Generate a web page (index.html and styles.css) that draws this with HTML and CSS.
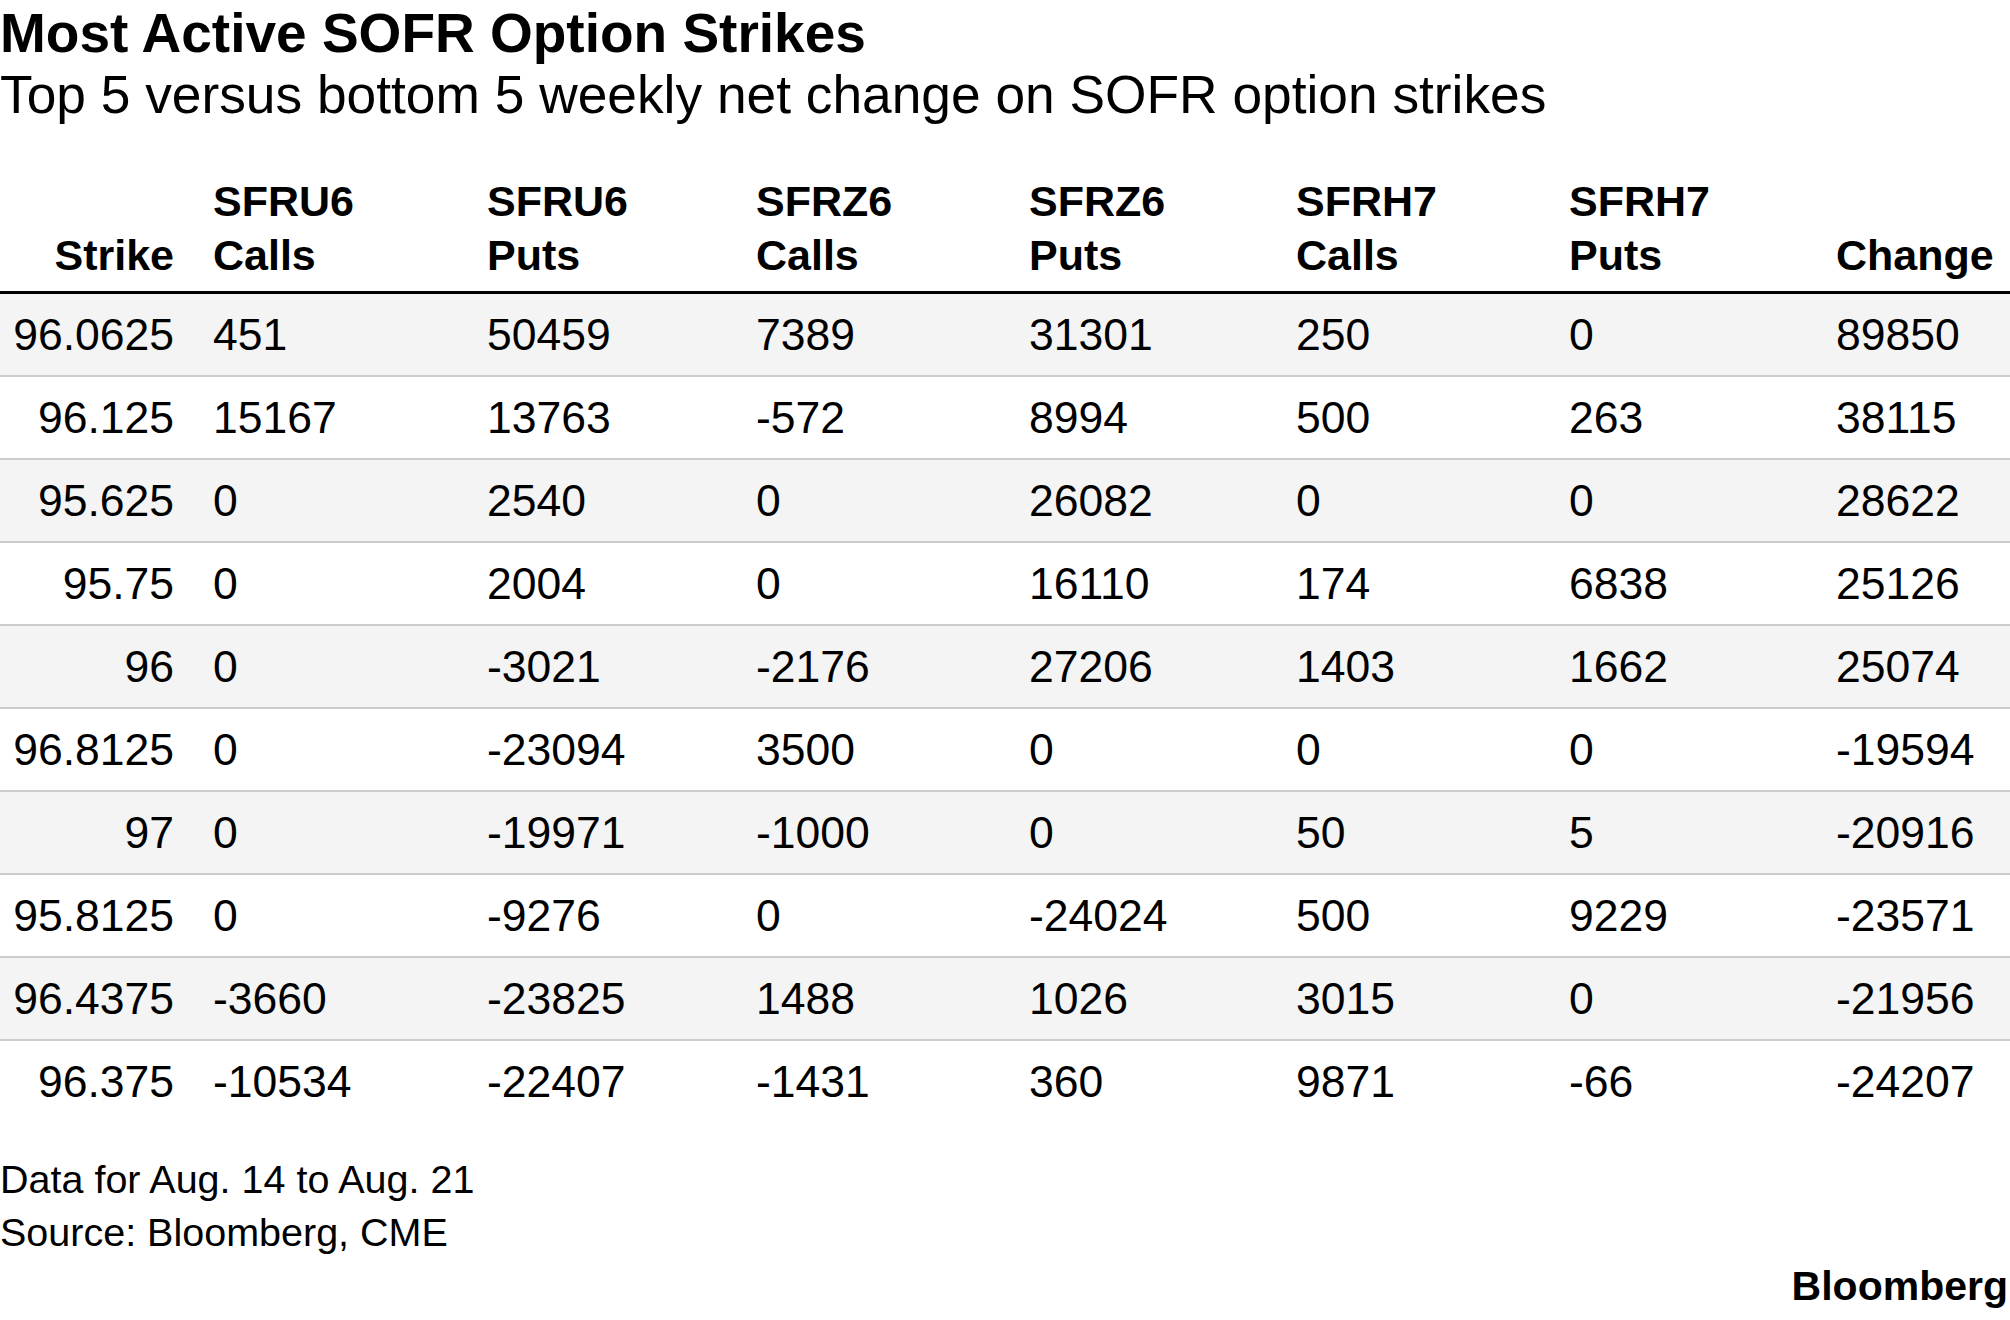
FILE: index.html
```html
<!DOCTYPE html>
<html lang="en">
<head>
<meta charset="utf-8">
<title>Most Active SOFR Option Strikes</title>
<link rel="stylesheet" href="styles.css">
</head>
<body>
<div class="chart">
  <h1 class="title">Most Active SOFR Option Strikes</h1>
  <p class="subtitle">Top 5 versus bottom 5 weekly net change on SOFR option strikes</p>
  <div class="table">
    <div class="row head">
      <div class="cell first">Strike</div>
      <div class="cell">SFRU6<br>Calls</div>
      <div class="cell">SFRU6<br>Puts</div>
      <div class="cell">SFRZ6<br>Calls</div>
      <div class="cell">SFRZ6<br>Puts</div>
      <div class="cell">SFRH7<br>Calls</div>
      <div class="cell">SFRH7<br>Puts</div>
      <div class="cell">Change</div>
    </div>
    <div class="row body alt">
      <div class="cell first">96.0625</div><div class="cell">451</div><div class="cell">50459</div><div class="cell">7389</div><div class="cell">31301</div><div class="cell">250</div><div class="cell">0</div><div class="cell">89850</div>
    </div>
    <div class="row body">
      <div class="cell first">96.125</div><div class="cell">15167</div><div class="cell">13763</div><div class="cell">-572</div><div class="cell">8994</div><div class="cell">500</div><div class="cell">263</div><div class="cell">38115</div>
    </div>
    <div class="row body alt">
      <div class="cell first">95.625</div><div class="cell">0</div><div class="cell">2540</div><div class="cell">0</div><div class="cell">26082</div><div class="cell">0</div><div class="cell">0</div><div class="cell">28622</div>
    </div>
    <div class="row body">
      <div class="cell first">95.75</div><div class="cell">0</div><div class="cell">2004</div><div class="cell">0</div><div class="cell">16110</div><div class="cell">174</div><div class="cell">6838</div><div class="cell">25126</div>
    </div>
    <div class="row body alt">
      <div class="cell first">96</div><div class="cell">0</div><div class="cell">-3021</div><div class="cell">-2176</div><div class="cell">27206</div><div class="cell">1403</div><div class="cell">1662</div><div class="cell">25074</div>
    </div>
    <div class="row body">
      <div class="cell first">96.8125</div><div class="cell">0</div><div class="cell">-23094</div><div class="cell">3500</div><div class="cell">0</div><div class="cell">0</div><div class="cell">0</div><div class="cell">-19594</div>
    </div>
    <div class="row body alt">
      <div class="cell first">97</div><div class="cell">0</div><div class="cell">-19971</div><div class="cell">-1000</div><div class="cell">0</div><div class="cell">50</div><div class="cell">5</div><div class="cell">-20916</div>
    </div>
    <div class="row body">
      <div class="cell first">95.8125</div><div class="cell">0</div><div class="cell">-9276</div><div class="cell">0</div><div class="cell">-24024</div><div class="cell">500</div><div class="cell">9229</div><div class="cell">-23571</div>
    </div>
    <div class="row body alt">
      <div class="cell first">96.4375</div><div class="cell">-3660</div><div class="cell">-23825</div><div class="cell">1488</div><div class="cell">1026</div><div class="cell">3015</div><div class="cell">0</div><div class="cell">-21956</div>
    </div>
    <div class="row body">
      <div class="cell first">96.375</div><div class="cell">-10534</div><div class="cell">-22407</div><div class="cell">-1431</div><div class="cell">360</div><div class="cell">9871</div><div class="cell">-66</div><div class="cell">-24207</div>
    </div>
  </div>
  <div class="notes">
    <p>Data for Aug. 14 to Aug. 21</p>
    <p>Source: Bloomberg, CME</p>
  </div>
  <div class="brand">Bloomberg</div>
</div>
</body>
</html>
```

FILE: styles.css
```css
html, body {
  margin: 0;
  padding: 0;
  background: #ffffff;
}

body {
  color: #000000;
  font-family: "Liberation Sans", Arial, sans-serif;
}

.chart {
  width: 2010px;
}

.title {
  margin: 3px 0 0;
  font-size: 55px;
  line-height: 60px;
  font-weight: 700;
}

.subtitle {
  margin: 1.5px 0 0;
  font-size: 53.3px;
  line-height: 60px;
  font-weight: 400;
}

.table {
  margin-top: 49.5px;
}

.row {
  display: grid;
  grid-template-columns: 213px 274px 269px 273px 267px 273px 267px 1fr;
}

.cell {
  white-space: nowrap;
}

.cell.first {
  text-align: right;
  padding-right: 39px;
}

.head {
  font-size: 43px;
  line-height: 54px;
  font-weight: 700;
  align-items: end;
  padding-bottom: 9px;
  border-bottom: 3px solid #000000;
}

.body {
  height: 81px;
  align-items: center;
  font-size: 44.5px;
  line-height: 81px;
  border-bottom: 2.5px solid #cccccc;
}

.body:last-child {
  border-bottom: none;
}

.alt {
  background: #f4f4f4;
}

.notes {
  margin-top: 31px;
}

.notes p {
  margin: 0;
  font-size: 39.5px;
  line-height: 53px;
}

.brand {
  margin-top: 3px;
  padding-right: 2px;
  text-align: right;
  font-size: 41px;
  line-height: 48px;
  font-weight: 700;
}
```
